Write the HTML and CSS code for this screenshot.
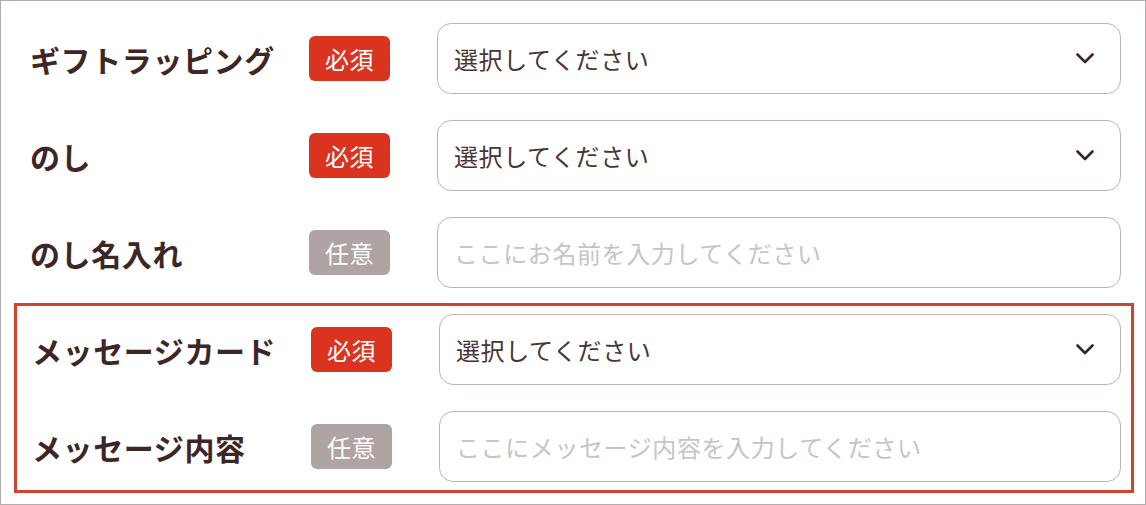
FILE: index.html
```html
<!DOCTYPE html>
<html lang="ja">
<head>
<meta charset="utf-8">
<link rel="stylesheet" href="styles.css">
</head>
<body>
<div class="frame">
  <div class="group">
    <div class="row">
      <div class="label">ギフトラッピング</div>
      <span class="badge req">必須</span>
      <div class="field select"><span class="value">選択してください</span>
        <svg class="chev" width="18" height="11" viewBox="0 0 18 11"><path d="M1.5 1.5 L9 9 L16.5 1.5" fill="none" stroke="#3b2424" stroke-width="2.6" stroke-linecap="round" stroke-linejoin="round"/></svg>
      </div>
    </div>
    <div class="row">
      <div class="label">のし</div>
      <span class="badge req">必須</span>
      <div class="field select"><span class="value">選択してください</span>
        <svg class="chev" width="18" height="11" viewBox="0 0 18 11"><path d="M1.5 1.5 L9 9 L16.5 1.5" fill="none" stroke="#3b2424" stroke-width="2.6" stroke-linecap="round" stroke-linejoin="round"/></svg>
      </div>
    </div>
    <div class="row">
      <div class="label">のし名入れ</div>
      <span class="badge opt">任意</span>
      <div class="field"><span class="placeholder">ここにお名前を入力してください</span></div>
    </div>
  </div>
  <div class="group highlight">
    <div class="row">
      <div class="label">メッセージカード</div>
      <span class="badge req">必須</span>
      <div class="field select"><span class="value">選択してください</span>
        <svg class="chev" width="18" height="11" viewBox="0 0 18 11"><path d="M1.5 1.5 L9 9 L16.5 1.5" fill="none" stroke="#3b2424" stroke-width="2.6" stroke-linecap="round" stroke-linejoin="round"/></svg>
      </div>
    </div>
    <div class="row">
      <div class="label">メッセージ内容</div>
      <span class="badge opt">任意</span>
      <div class="field"><span class="placeholder">ここにメッセージ内容を入力してください</span></div>
    </div>
  </div>
</div>
</body>
</html>
```
FILE: styles.css
```css
* { box-sizing: border-box; }
html, body { margin: 0; padding: 0; background: #fff; }
body {
  font-family: "Noto Sans CJK JP", "Noto Sans", sans-serif;
  color: #3d2828;
}
.frame {
  width: 1146px;
  height: 505px;
  border: 1px solid #b4abab;
  padding: 22px 0 0 0;
}
.group {
  display: flex;
  flex-direction: column;
  gap: 26px;
  padding: 0 24px 0 29px;
  margin-bottom: 15px;
}
.group.highlight {
  margin: 0 11px 0 13px;
  border: 3px solid #d2442f;
  padding: 8px 10px 8px 15px;
}
.row {
  display: flex;
  align-items: center;
  height: 71px;
}
.label {
  width: 279px;
  flex: none;
  font-size: 30px;
  font-weight: 700;
  letter-spacing: 0.6px;
  color: #3d2626;
  white-space: nowrap;
}
.badge {
  flex: none;
  width: 81px;
  display: flex;
  align-items: center;
  justify-content: center;
  height: 45px;
  border-radius: 6px;
  color: #fff;
  font-size: 24px;
  letter-spacing: 0.5px;
}
.badge.req { background: #da3420; }
.badge.opt { background: #afa3a3; }
.field {
  flex: 1;
  margin-left: 47px;
  height: 71px;
  border: 1.5px solid #bfb4b4;
  border-radius: 14px;
  display: flex;
  align-items: center;
  justify-content: space-between;
  padding: 0 26px 0 16px;
  font-size: 24px;
  letter-spacing: 0.6px;
}
.value { color: #4a3434; }
.placeholder { color: #cbc3c3; }
.chev { display: block; }
```
